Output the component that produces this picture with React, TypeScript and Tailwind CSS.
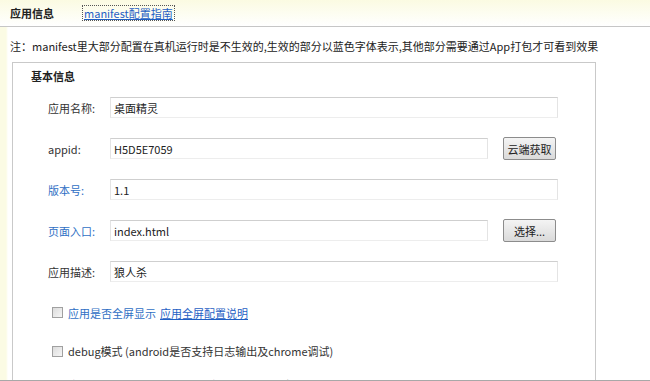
import React from "react";

interface FieldRowProps {
  label: string;
  value: string;
  blue?: boolean;
  button?: string;
}

const FieldRow = ({ label, value, blue, button }: FieldRowProps) => {
  return (
    <div className="flex h-[41px] items-center pl-[35px]">
      <span
        className={
          blue ? "w-[62px] text-[#2f6fc4]" : "w-[62px] text-[#333333]"
        }
      >
        {label}
      </span>
      <div
        className={
          (button ? "w-[378px]" : "w-[448px]") +
          " flex h-[21px] items-center border border-[#e4e4e4] border-t-[#cfcfcf] border-b-[#ededed] bg-white pl-[3px] text-[#222222]"
        }
      >
        {value}
      </div>
      {button && (
        <button className="ml-[15px] flex h-[23px] w-[53px] items-center justify-center rounded-[2px] border border-[#8c8c8c] bg-gradient-to-b from-[#f4f4f4] to-[#dadada] text-[#222222]">
          {button}
        </button>
      )}
    </div>
  );
};

const CheckBox = () => (
  <span className="mr-[5px] inline-block h-[11px] w-[11px] shrink-0 border border-[#a0a0a0] bg-gradient-to-br from-[#dcdcdc] to-[#f6f6f6]" />
);

export default function App() {
  return (
    <div className="flex h-[381px] w-[650px] flex-col overflow-hidden bg-white font-['Noto_Sans_CJK_SC',sans-serif] text-[11px] leading-[16px] text-[#333333]">
      {/* top tabs */}
      <div className="flex h-[27px] shrink-0 items-center border-b border-[#c6c6c6] bg-gradient-to-b from-[#fbfbe2] to-white pl-[10px]">
        <span className="w-[72px] font-bold text-[#222222]">应用信息</span>
        <a className="border border-dotted border-[#555555] px-px leading-[14px] text-[#1f5fc4] underline">
          manifest配置指南
        </a>
      </div>

      <div className="flex min-h-0 flex-1 flex-col bg-[linear-gradient(to_right,#fbfbe4_0,#fbfbe4_6px,#ffffff_8px)]">
        <p className="pl-[10px] pt-[11px] text-[#222222]">
          注：manifest里大部分配置在真机运行时是不生效的,生效的部分以蓝色字体表示,其他部分需要通过App打包才可看到效果
        </p>

        <div className="ml-[12px] mt-[8px] w-[584px] flex-1 border border-b-0 border-[#c9c9c9] bg-white">
          <div className="pl-[18px] pt-[5px] font-bold text-[#222222]">基本信息</div>
          <div className="mt-[3px]">
            <FieldRow label="应用名称:" value="桌面精灵" />
            <FieldRow label="appid:" value="H5D5E7059" button="云端获取" />
            <FieldRow label="版本号:" value="1.1" blue />
            <FieldRow label="页面入口:" value="index.html" blue button="选择..." />
            <FieldRow label="应用描述:" value="狼人杀" />
          </div>

          <div className="flex h-[41px] items-center pl-[39px] text-[#2f6fc4]">
            <CheckBox />
            <span>应用是否全屏显示</span>
            <a className="ml-[4px] text-[#1f5fc4] underline">应用全屏配置说明</a>
          </div>
          <div className="flex h-[36px] items-center pl-[39px] text-[#333333]">
            <CheckBox />
            <span>debug模式 (android是否支持日志输出及chrome调试)</span>
          </div>
          <div className="flex h-[32px] items-center gap-[14px] pl-[39px] text-[#333333]">
            <span className="flex items-center">
              <CheckBox />
              应用运行时显示状态栏
            </span>
            <span className="flex items-center">
              <CheckBox />
              应用运行时显示标题栏
            </span>
            <span className="flex items-center">
              <CheckBox />
              沉浸式状态栏
            </span>
          </div>
        </div>
      </div>

      <div className="h-px shrink-0 bg-[#a8a8a8]" />
    </div>
  );
}
